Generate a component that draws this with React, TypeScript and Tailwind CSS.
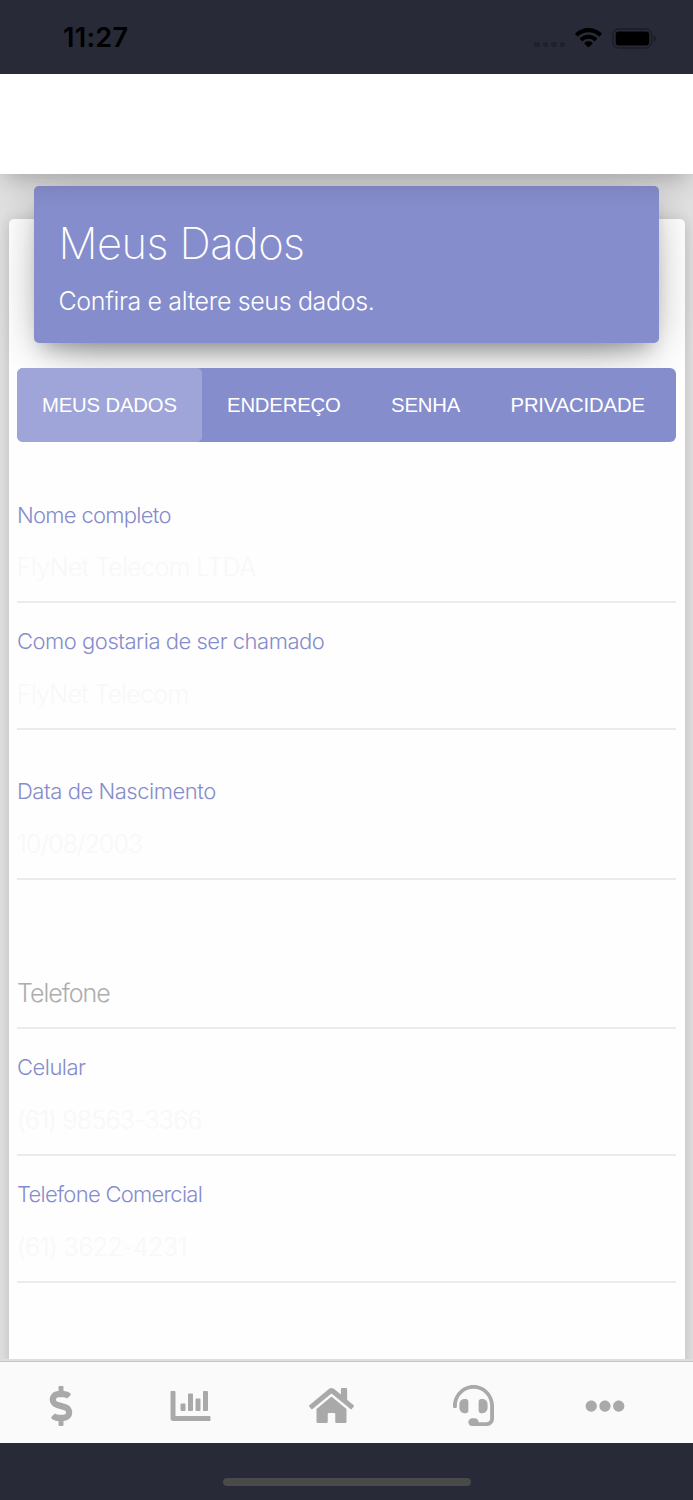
import { FaChartBar, FaDollarSign, FaEllipsisH, FaHeadset, FaHome } from "react-icons/fa";

type fieldProps = {
    label?: string
    value: string
    labelClass?: string
    valueClass: string
    className: string
}

const tabs = [
    { name: "MEUS DADOS", box: "w-[185px] bg-[#9fa5d8] rounded-[5px]" },
    { name: "ENDEREÇO", box: "w-[164px]" },
    { name: "SENHA", box: "w-[119.5px]" },
    { name: "PRIVACIDADE", box: "w-[185px]" },
]

const fields: fieldProps[] = [
    { label: "Nome completo", value: "FlyNet Telecom LTDA", className: "mt-[58px]", labelClass: "mb-[22px] tracking-[-0.7px]", valueClass: "text-[#f8f8f8] tracking-[-0.65px]" },
    { label: "Como gostaria de ser chamado", value: "FlyNet Telecom", className: "mt-[23px]", labelClass: "mb-[23px] tracking-[-0.48px]", valueClass: "text-[#f8f8f8] tracking-[-0.75px]" },
    { label: "Data de Nascimento", value: "10/08/2003", className: "mt-[46px]", labelClass: "mb-[23px] tracking-[-0.45px]", valueClass: "text-[#f8f8f8] tracking-[-0.95px]" },
    { value: "Telefone", className: "mt-[98px]", valueClass: "text-[#adadad] tracking-[-1px]" },
    { label: "Celular", value: "(61) 98563-3366", className: "mt-[23px]", labelClass: "mb-[23px] tracking-[-0.5px]", valueClass: "text-[#f8f8f8] tracking-[-0.75px]" },
    { label: "Telefone Comercial", value: "(61) 3622-4231", className: "mt-[23px]", labelClass: "mb-[23px] tracking-[-0.72px]", valueClass: "text-[#f8f8f8] tracking-[-0.55px]" },
]

function StatusBar() {
    return (
        <div className="h-[74px] shrink-0 bg-[#282a38] flex items-center justify-between pl-[63px] pr-[36px] relative z-20">
            <span className="text-[27px] leading-[32px] font-semibold text-black tracking-[0.3px] mt-[2px]">11:27</span>
            <div className="flex items-center mt-[2px]">
                <div className="flex gap-[3px] mt-[13px] mr-[10px]">
                    <i className="size-[5.5px] rounded-[2px] bg-[#1f212c]" />
                    <i className="size-[5.5px] rounded-[2px] bg-[#1f212c]" />
                    <i className="size-[5.5px] rounded-[2px] bg-[#1f212c]" />
                    <i className="size-[5.5px] rounded-[2px] bg-[#1f212c]" />
                </div>
                <svg width="27" height="20" viewBox="0 0 27 20" className="mr-[10px]">
                    <path d="M13.5 0C18.6 0 23.2 2 26.6 5.3C26.9 5.6 26.9 6 26.6 6.3L24.7 8.2C24.4 8.5 24 8.5 23.7 8.2C21 5.7 17.4 4.2 13.5 4.2C9.6 4.2 6 5.7 3.3 8.2C3 8.5 2.6 8.5 2.3 8.2L.4 6.3C.1 6 .1 5.6 .4 5.3C3.8 2 8.4 0 13.5 0Z" />
                    <path d="M13.5 6.7C16.8 6.7 19.8 8 22 10C22.3 10.3 22.3 10.7 22 11L20.1 12.9C19.8 13.2 19.4 13.2 19.1 12.9C17.6 11.6 15.6 10.8 13.5 10.8C11.4 10.8 9.4 11.6 7.9 12.9C7.6 13.2 7.2 13.2 6.9 12.9L5 11C4.7 10.7 4.7 10.3 5 10C7.2 8 10.2 6.7 13.5 6.7Z" />
                    <path d="M13.5 13.3C15 13.3 16.3 13.8 17.4 14.7C17.7 15 17.7 15.4 17.4 15.7L14 19.1C13.7 19.4 13.3 19.4 13 19.1L9.6 15.7C9.3 15.4 9.3 15 9.6 14.7C10.7 13.8 12 13.3 13.5 13.3Z" />
                </svg>
                <svg width="45" height="21" viewBox="0 0 45 21">
                    <rect x="1" y="1" width="38.5" height="19" rx="5.5" fill="none" stroke="#1b1c26" strokeWidth="1.3" />
                    <rect x="3.7" y="3.5" width="33.5" height="14" rx="3" />
                    <path d="M41.5 7.3c1.6.6 2.4 1.8 2.4 3.2s-.8 2.6-2.4 3.2z" fill="#1b1c26" />
                </svg>
            </div>
        </div>
    )
}

function Field({ label, value, className, labelClass, valueClass }: fieldProps) {
    return (
        <div className={`border-b-[2px] border-[#ebebeb] ${className}`}>
            {label && <div className={`text-[22px] leading-[30px] font-light text-[#858ccb] ${labelClass}`}>{label}</div>}
            <div className={`text-[25px] leading-[30px] mb-[19px] font-light ${valueClass}`}>{value}</div>
        </div>
    )
}

export default function App() {
    return (
        <div className="w-[693px] h-[1500px] flex flex-col overflow-hidden bg-[#e0e0e0] font-['Inter','Liberation_Sans',sans-serif]">
            <StatusBar />
            <header className="h-[100px] shrink-0 bg-white relative z-10 shadow-[0_7px_30px_rgba(0,0,0,0.12),0_12px_17px_-8px_rgba(0,0,0,0.15)]" />

            <main className="flex-1 min-h-0 pt-[45px] px-[8.5px]">
                <section className="h-[1200px] bg-[#fefefe] rounded-[5px] px-[8.5px] shadow-[0_2px_14px_rgba(0,0,0,0.16)]">
                    {/* banner sticks out above the card */}
                    <div className="-mt-[33px] relative float-left">
                        <div className="mx-[16.5px] w-[625.5px] h-[157px] rounded-[5px] bg-[#868dcc] text-white px-[25px] pt-[30px] shadow-[0_17px_50px_-20px_rgba(0,0,0,0.42),0_7px_42px_rgba(0,0,0,0.12),0_13px_17px_-8px_rgba(0,0,0,0.2)]">
                            <h1 className="text-[43.5px] leading-[54px] font-extralight tracking-[-0.55px]">Meus Dados</h1>
                            <p className="text-[25px] leading-[30px] mt-[16px] font-light tracking-[-0.36px]">Confira e altere seus dados.</p>
                        </div>
                        <nav className="flex mt-[25px] w-[659px] h-[74px] rounded-[6px] bg-[#868dcc] overflow-hidden font-['Liberation_Sans',sans-serif]">
                            {tabs.map((tab) => (
                                <button key={tab.name} className={`h-full shrink-0 px-[25px] text-left text-white text-[20.3px] tracking-[-0.15px] whitespace-nowrap ${tab.box}`}>
                                    {tab.name}
                                </button>
                            ))}
                        </nav>
                        {fields.map((field) => (
                            <Field key={field.value} {...field} />
                        ))}
                    </div>
                </section>
            </main>

            <footer className="h-[84px] shrink-0 bg-[#fafafa] border-t-[2px] border-[#dedede] relative z-10">
                <div className="h-[82px] border-t border-[#c6c6c6] flex items-center text-[#a9a9a9] pt-[6px]">
                    <FaDollarSign className="w-[40px] h-[40px] ml-[40.5px]" />
                    <FaChartBar className="w-[41px] h-[40px] ml-[89.5px]" />
                    <FaHome className="w-[45px] h-[41px] ml-[98px]" />
                    <FaHeadset className="w-[41px] h-[41px] ml-[98.5px]" />
                    <FaEllipsisH className="w-[40px] h-[40px] ml-[91px]" />
                </div>
            </footer>
            <div className="h-[57px] shrink-0 bg-[#282a38] flex justify-center pt-[35px]">
                <div className="w-[248px] h-[8px] rounded-full bg-[#4a4a4a]" />
            </div>
        </div>
    )
}
